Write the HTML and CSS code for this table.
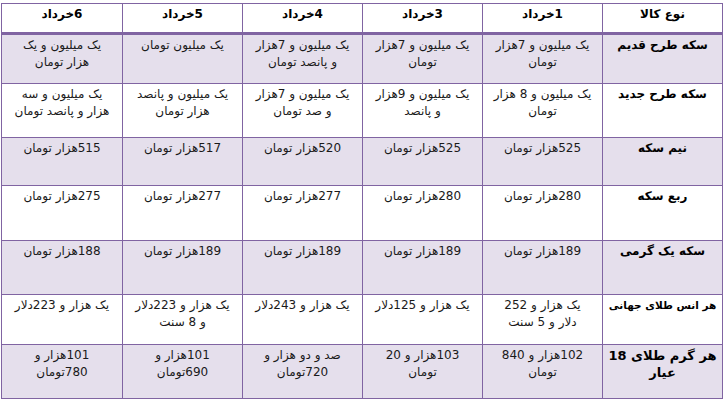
FILE: index.html
```html
<!DOCTYPE html>
<html lang="fa" dir="rtl">
<head>
<meta charset="utf-8">
<title>قیمت سکه و طلا</title>
<link rel="stylesheet" href="styles.css">
</head>
<body>
<table class="prices">
  <colgroup>
    <col class="col-label"><col class="col-day"><col class="col-day"><col class="col-day"><col class="col-day"><col class="col-last">
  </colgroup>
  <thead>
    <tr class="head">
      <th><div class="ln">نوع کالا</div></th>
      <th><div class="ln">1خرداد</div></th>
      <th><div class="ln">3خرداد</div></th>
      <th><div class="ln">4خرداد</div></th>
      <th><div class="ln">5خرداد</div></th>
      <th><div class="ln">6خرداد</div></th>
    </tr>
  </thead>
  <tbody>
    <tr class="shade r1">
      <th><div class="ln">سکه طرح قدیم</div></th>
      <td><div class="ln">یک میلیون و 7هزار</div><div class="ln">تومان</div></td>
      <td><div class="ln">یک میلیون و 7هزار</div><div class="ln">تومان</div></td>
      <td><div class="ln">یک میلیون و 7هزار</div><div class="ln">و پانصد تومان</div></td>
      <td><div class="ln">یک میلیون تومان</div></td>
      <td><div class="ln">یک میلیون و یک</div><div class="ln">هزار تومان</div></td>
    </tr>
    <tr class="r2">
      <th><div class="ln">سکه طرح جدید</div></th>
      <td><div class="ln">یک میلیون و 8 هزار</div><div class="ln">تومان</div></td>
      <td><div class="ln">یک میلیون و 9هزار</div><div class="ln">و پانصد</div></td>
      <td><div class="ln">یک میلیون و 7هزار</div><div class="ln">و صد تومان</div></td>
      <td><div class="ln">یک میلیون و پانصد</div><div class="ln">هزار تومان</div></td>
      <td><div class="ln">یک میلیون و سه</div><div class="ln">هزار و پانصد تومان</div></td>
    </tr>
    <tr class="shade r3">
      <th><div class="ln">نیم سکه</div></th>
      <td><div class="ln">525هزار تومان</div></td>
      <td><div class="ln">525هزار تومان</div></td>
      <td><div class="ln">520هزار تومان</div></td>
      <td><div class="ln">517هزار تومان</div></td>
      <td><div class="ln">515هزار تومان</div></td>
    </tr>
    <tr class="r4">
      <th><div class="ln">ربع سکه</div></th>
      <td><div class="ln">280هزار تومان</div></td>
      <td><div class="ln">280هزار تومان</div></td>
      <td><div class="ln">277هزار تومان</div></td>
      <td><div class="ln">277هزار تومان</div></td>
      <td><div class="ln">275هزار تومان</div></td>
    </tr>
    <tr class="shade r5">
      <th><div class="ln">سکه یک گرمی</div></th>
      <td><div class="ln">189هزار تومان</div></td>
      <td><div class="ln">189هزار تومان</div></td>
      <td><div class="ln">189هزار تومان</div></td>
      <td><div class="ln">189هزار تومان</div></td>
      <td><div class="ln">188هزار تومان</div></td>
    </tr>
    <tr class="r6">
      <th><div class="ln narrow">هر انس طلای جهانی</div></th>
      <td><div class="ln">یک هزار و 252</div><div class="ln">دلار و 5 سنت</div></td>
      <td><div class="ln">یک هزار و 125دلار</div></td>
      <td><div class="ln">یک هزار و 243دلار</div></td>
      <td><div class="ln">یک هزار و 223دلار</div><div class="ln">و 8 سنت</div></td>
      <td><div class="ln">یک هزار و 223دلار</div></td>
    </tr>
    <tr class="shade r7">
      <th><div class="ln big">هر گرم طلای 18</div><div class="ln big">عیار</div></th>
      <td><div class="ln">102هزار و 840</div><div class="ln">تومان</div></td>
      <td><div class="ln">103هزار و 20</div><div class="ln">تومان</div></td>
      <td><div class="ln">صد و دو هزار و</div><div class="ln">720تومان</div></td>
      <td><div class="ln">101هزار و</div><div class="ln">690تومان</div></td>
      <td><div class="ln">101هزار و</div><div class="ln">780تومان</div></td>
    </tr>
  </tbody>
</table>
</body>
</html>
```

FILE: styles.css
```css
html, body {
  margin: 0;
  padding: 0;
  background: #ffffff;
}

body {
  font-family: "DejaVu Sans", sans-serif;
  font-size: 12px;
  color: #1a1a1a;
}

.prices {
  direction: rtl;
  border-collapse: collapse;
  table-layout: fixed;
  width: 721px;
  margin: 3px 3px 0 0;
}

.col-label, .col-day { width: 120px; }
.col-last { width: 121px; }

.prices th,
.prices td {
  border: 1px solid #8064a2;
  padding: 2px 2px 0;
  vertical-align: top;
  text-align: center;
  line-height: 17px;
  font-weight: normal;
  overflow: hidden;
}

.prices th {
  font-weight: bold;
  color: #000;
}

.head th {
  border-bottom: 3px solid #8064a2;
}

.ln {
  direction: rtl;
  white-space: nowrap;
}

.narrow {
  font-size: 10.5px;
}

.big {
  font-size: 13px;
}

.shade th,
.shade td {
  background: #e5dfec;
}

.head { height: 30px; }
.r1 { height: 50px; }
.r2 { height: 54px; }
.r3 { height: 48px; }
.r4 { height: 55px; }
.r5 { height: 54px; }
.r6 { height: 50px; }
.r7 { height: 54px; }
```
